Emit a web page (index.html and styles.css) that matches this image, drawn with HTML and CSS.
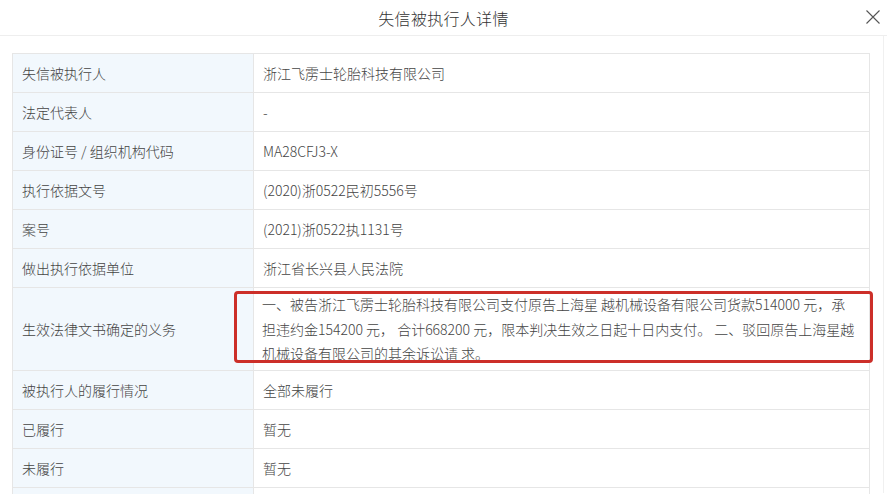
FILE: index.html
```html
<!DOCTYPE html>
<html lang="zh-CN">
<head>
<meta charset="utf-8">
<title>失信被执行人详情</title>
<link rel="stylesheet" href="styles.css">
</head>
<body>
<div class="dialog">
  <div class="header">
    <div class="title">失信被执行人详情</div>
    <button class="close" aria-label="关闭">
      <svg width="16" height="16" viewBox="0 0 16 16"><path d="M1.5 1.5 L14.5 14.5 M14.5 1.5 L1.5 14.5" stroke="#555" stroke-width="1.1" fill="none"/></svg>
    </button>
  </div>
  <div class="body">
    <div class="table-wrap">
      <table class="info">
        <tr><td class="label">失信被执行人</td><td class="value">浙江飞雳士轮胎科技有限公司</td></tr>
        <tr><td class="label">法定代表人</td><td class="value">-</td></tr>
        <tr><td class="label">身份证号 / 组织机构代码</td><td class="value">MA28CFJ3-X</td></tr>
        <tr><td class="label">执行依据文号</td><td class="value">(2020)浙0522民初5556号</td></tr>
        <tr><td class="label">案号</td><td class="value">(2021)浙0522执1131号</td></tr>
        <tr><td class="label">做出执行依据单位</td><td class="value">浙江省长兴县人民法院</td></tr>
        <tr><td class="label">生效法律文书确定的义务</td><td class="value tall">一、被告浙江飞雳士轮胎科技有限公司支付原告上海星 越机械设备有限公司货款514000 元，承<br>担违约金154200 元， 合计668200 元，限本判决生效之日起十日内支付。 二、驳回原告上海星越<br>机械设备有限公司的其余诉讼请 求。</td></tr>
        <tr><td class="label">被执行人的履行情况</td><td class="value">全部未履行</td></tr>
        <tr><td class="label">已履行</td><td class="value">暂无</td></tr>
        <tr><td class="label">未履行</td><td class="value">暂无</td></tr>
        <tr><td class="label">&nbsp;</td><td class="value">&nbsp;</td></tr>
      </table>
      <div class="highlight"></div>
    </div>
  </div>
</div>
</body>
</html>
```

FILE: styles.css
```css
html, body {
  margin: 0;
  padding: 0;
  background: #fff;
  overflow: hidden;
}
body {
  font-family: "Noto Sans CJK SC", "Microsoft YaHei", sans-serif;
  color: #444;
  font-size: 14px;
  font-weight: 300;
}
.dialog {
  width: 887px;
  height: 494px;
  overflow: hidden;
}
.header {
  height: 35px;
  border-bottom: 1px solid #eeeeee;
  display: flex;
  align-items: center;
  justify-content: center;
  position: relative;
}
.title {
  font-size: 16px;
  color: #333;
  letter-spacing: 0.3px;
}
.close {
  position: absolute;
  right: 6px;
  top: 9px;
  border: 0;
  background: none;
  padding: 0;
  width: 16px;
  height: 16px;
  cursor: pointer;
}
.body {
  padding: 17px 0 0 12px;
  border-right: 1px solid #f0f0f0;
  width: 871px;
  height: 440px;
}
.table-wrap {
  position: relative;
  width: 858px;
}
.info {
  border-collapse: collapse;
  width: 858px;
  table-layout: fixed;
}
.info td {
  border: 1px solid #e6e6e6;
  padding: 8px 9px;
  line-height: 22px;
  vertical-align: middle;
  color: #444;
}
.info td.label {
  width: 222px;
  background: #f2f8fd;
}
.info td.value {
  background: #fff;
}
.info td.tall {
  line-height: 24.5px;
  padding: 4px 9px 4px 8px;
  white-space: nowrap;
}
.highlight {
  position: absolute;
  left: 222px;
  top: 238px;
  width: 633px;
  height: 66px;
  border: 3px solid #cc2f29;
  border-radius: 4px;
  pointer-events: none;
}
```
